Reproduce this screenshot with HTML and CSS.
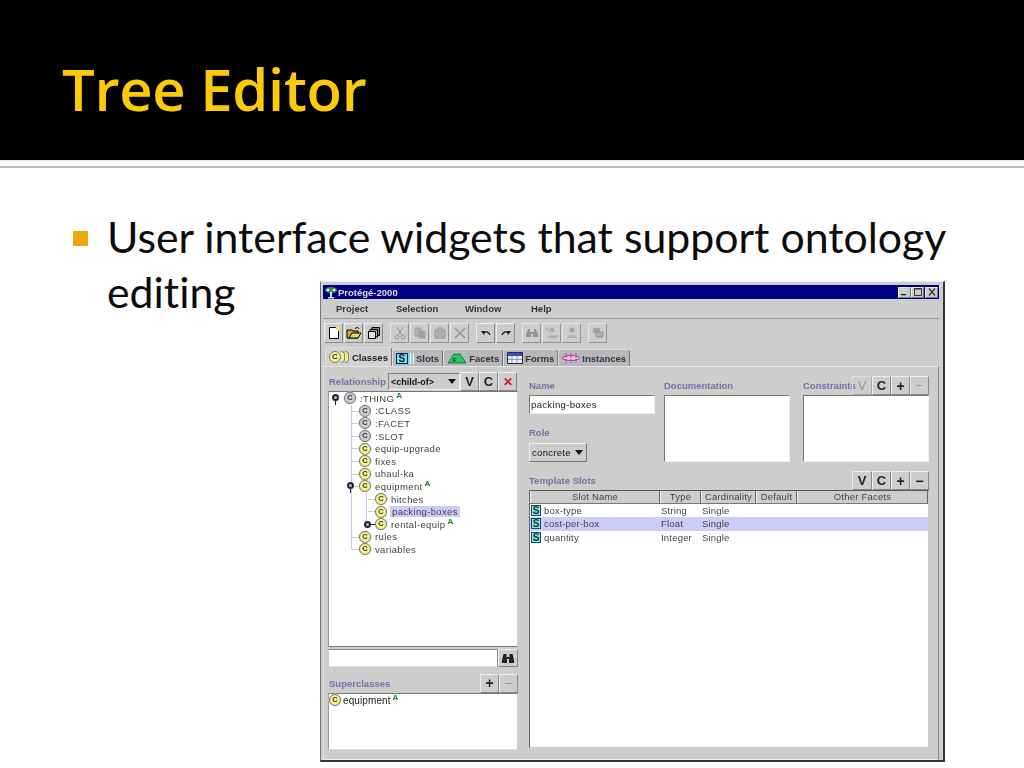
FILE: index.html
```html
<!DOCTYPE html>
<html lang="en">
<head>
<meta charset="utf-8">
<title>Tree Editor</title>
<link rel="stylesheet" href="styles.css">
</head>
<body>
<div class="slide">
  <header class="head"><h1>Tree Editor</h1></header>
  <div class="rule"></div>
  <div class="body">
    <span class="bullet"></span>
    <p class="point">User interface widgets that support ontology<br>editing</p>
  </div>

  <div class="window">
    <div class="titlebar">
      <svg class="appicon" width="14" height="13" viewBox="0 0 14 13"><path d="M1 4c0-2 3-3 6-3s6 1 6 3-2 3-6 3-6-1-6-3z" fill="#3c8a4a"/><circle cx="4" cy="4" r="1.300" fill="#eee"/><circle cx="10" cy="4" r="1.300" fill="#eee"/><path d="M6 6h2v5h2v1.500H4V11h2z" fill="#ddd"/></svg>
      <span class="wintitle">Protégé-2000</span>
      <span class="winbtns">
        <span class="winbtn"><svg width="10" height="8" viewBox="0 0 10 8"><path d="M1 6h5v1.300H1z" fill="#222"/></svg></span>
        <span class="winbtn"><svg width="10" height="8" viewBox="0 0 10 8"><path d="M1.500 .5h7v7h-7z" fill="none" stroke="#333"/><path d="M1.500 1h7" stroke="#333"/></svg></span>
        <span class="winbtn close"><svg width="10" height="8" viewBox="0 0 10 8"><path d="M2 .5l6 7M8 .5l-6 7" stroke="#333" stroke-width="1.200"/></svg></span>
      </span>
    </div>
    <nav class="menubar"><span>Project</span><span>Selection</span><span>Window</span><span>Help</span></nav>
    <div class="toolbar">
      <div class="toolgroup">
        <span class="tool"><svg width="14" height="14" viewBox="0 0 14 14"><path d="M2.500 1.500h6l3 3v8h-9z" fill="#fff" stroke="#000"/><circle cx="11" cy="3" r="2" fill="#f4ee50"/></svg></span>
        <span class="tool"><svg width="16" height="14" viewBox="0 0 16 14"><path d="M1 4h5l1 1h5v7H1z" fill="#c8a838" stroke="#000"/><path d="M3 12l3-5h9l-3 5z" fill="#f0d860" stroke="#000"/><path d="M9 3c1-2 3-2 4 0" fill="none" stroke="#000"/></svg></span>
        <span class="tool"><svg width="14" height="14" viewBox="0 0 14 14"><path d="M5 1.500h7.500v8H5z" fill="#888" stroke="#000"/><path d="M3 3.500h7.500v7.500H3z" fill="#aaa" stroke="#000"/><path d="M1.500 5.500h7v7h-7z" fill="#ddd" stroke="#000"/></svg></span>
      </div>
      <div class="toolgroup">
        <span class="tool off"><svg width="12" height="14" viewBox="0 0 12 14"><path d="M3 1l5 8M9 1L4 9" stroke="#888" fill="none"/><circle cx="3" cy="11" r="2" fill="none" stroke="#888"/><circle cx="9" cy="11" r="2" fill="none" stroke="#888"/></svg></span>
        <span class="tool off"><svg width="14" height="14" viewBox="0 0 14 14"><path d="M2 2h6v8H2z" fill="#aaa" stroke="#999"/><path d="M6 5h6v7H6z" fill="#999" stroke="#999"/></svg></span>
        <span class="tool off"><svg width="14" height="14" viewBox="0 0 14 14"><path d="M2 4h10v8H2z" fill="#aaa" stroke="#888"/><path d="M5 2h4v3H5z" fill="#bbb" stroke="#888"/></svg></span>
        <span class="tool off"><svg width="14" height="14" viewBox="0 0 14 14"><path d="M2 2l10 10M12 2L2 12" stroke="#888" stroke-width="1.500"/></svg></span>
      </div>
      <div class="toolgroup">
        <span class="tool"><svg width="12" height="10" viewBox="0 0 12 10"><path d="M10 7c-1-3-4-4-7-2" fill="none" stroke="#113" stroke-width="1.200"/><path d="M1 3l4 0-1 4z" fill="#113"/></svg></span>
        <span class="tool"><svg width="12" height="10" viewBox="0 0 12 10"><path d="M2 7c1-3 4-4 7-2" fill="none" stroke="#113" stroke-width="1.200"/><path d="M11 3l-4 0 1 4z" fill="#113"/></svg></span>
      </div>
      <div class="toolgroup">
        <span class="tool off"><svg width="14" height="14" viewBox="0 0 14 14"><path d="M1 8l2-5h2v3h4V3h2l2 5v3H8V8H6v3H1z" fill="#888"/></svg></span>
        <span class="tool off"><svg width="14" height="14" viewBox="0 0 14 14"><circle cx="7" cy="4" r="2.500" fill="#aaa"/><path d="M2 12c1-4 9-4 10 0z" fill="#aaa"/><path d="M1 2l3 3M11 9l2 2" stroke="#888"/></svg></span>
        <span class="tool off"><svg width="14" height="14" viewBox="0 0 14 14"><circle cx="7" cy="4" r="2.500" fill="#999"/><path d="M2 12c1-4 9-4 10 0z" fill="#aaa"/></svg></span>
      </div>
      <div class="toolgroup">
        <span class="tool off"><svg width="14" height="14" viewBox="0 0 14 14"><path d="M2 2h7v5H2z" fill="#999"/><path d="M5 6h7v5H5z" fill="#aaa" stroke="#888"/></svg></span>
      </div>
    </div>
    <div class="tabs">
      <span class="tab active"><span class="tabc"><span class="cicon">C</span><i></i><i></i></span>Classes</span>
      <span class="tab"><span class="tabs-icon">S</span><span class="tabs-bars"></span>Slots</span>
      <span class="tab"><svg width="20" height="12" viewBox="0 0 20 12"><path d="M1 11L7 2h6l6 9z" fill="#30c068" stroke="#085"/><text x="6" y="10" font-size="6" font-family="Liberation Sans" fill="#030">F</text></svg>Facets</span>
      <span class="tab"><svg width="16" height="12" viewBox="0 0 16 12"><path d="M.5.500h15v11H.5z" fill="#eee" stroke="#226"/><path d="M1 1h14v3H1z" fill="#3a50b8"/><path d="M5 4v7M10 4v7M1 7.500h14" stroke="#99a"/></svg>Forms</span>
      <span class="tab"><svg width="18" height="12" viewBox="0 0 18 12"><ellipse cx="9" cy="6" rx="8.500" ry="2.500" fill="#f0c0f0" stroke="#a040a0"/><path d="M4 1v10M9 1v10M14 1v10" stroke="#a040a0" stroke-dasharray="2 1"/></svg>Instances</span>
    </div>
    <div class="panel">
      <section class="left">
        <div class="relrow">
          <span class="label">Relationship</span>
          <span class="combo rel"><span>&lt;child-of&gt;</span><span class="arrow"></span></span>
          <span class="sq">V</span><span class="sq">C</span><span class="sq red">✕</span>
        </div>
        <div class="tree">
          <ul class="t0">
            <li>
              <div class="row"><span class="handle open"></span><span class="cicon grey">C</span><span class="nm">:THING</span><span class="a">A</span></div>
              <ul class="t1">
                <li><div class="row"><span class="cicon grey">C</span><span class="nm">:CLASS</span></div></li>
                <li><div class="row"><span class="cicon grey">C</span><span class="nm">:FACET</span></div></li>
                <li><div class="row"><span class="cicon grey">C</span><span class="nm">:SLOT</span></div></li>
                <li><div class="row"><span class="cicon">C</span><span class="nm">equip-upgrade</span></div></li>
                <li><div class="row"><span class="cicon">C</span><span class="nm">fixes</span></div></li>
                <li><div class="row"><span class="cicon">C</span><span class="nm">uhaul-ka</span></div></li>
                <li>
                  <div class="row"><span class="handle open"></span><span class="cicon">C</span><span class="nm">equipment</span><span class="a">A</span></div>
                  <ul class="t2">
                    <li><div class="row"><span class="cicon">C</span><span class="nm">hitches</span></div></li>
                    <li><div class="row"><span class="cicon">C</span><span class="nm sel">packing-boxes</span></div></li>
                    <li><div class="row"><span class="handle closed"></span><span class="cicon">C</span><span class="nm">rental-equip</span><span class="a">A</span></div></li>
                  </ul>
                </li>
                <li><div class="row"><span class="cicon">C</span><span class="nm">rules</span></div></li>
                <li><div class="row"><span class="cicon">C</span><span class="nm">variables</span></div></li>
              </ul>
            </li>
          </ul>
        </div>
        <div class="searchrow">
          <span class="search"></span>
          <span class="sq find"><svg width="14" height="12" viewBox="0 0 14 12"><path d="M1 8l1.500-6h3v3h3V2h3L13 8v3H8V7H6v4H1z" fill="#222"/></svg></span>
        </div>
        <div class="superrow">
          <span class="label">Superclasses</span>
          <span class="sqgroup"><span class="sq plus">+</span><span class="sq off">−</span></span>
        </div>
        <div class="superlist">
          <div class="row"><span class="cicon">C</span><span class="nm">equipment</span><span class="a">A</span></div>
        </div>
      </section>
      <section class="right">
        <div class="fields">
          <div class="col1">
            <span class="label lh">Name</span>
            <div class="input">packing-boxes</div>
            <span class="label role">Role</span>
            <span class="combo conc"><span>concrete</span><span class="arrow"></span></span>
          </div>
          <div class="col2">
            <span class="label lh">Documentation</span>
            <div class="box"></div>
          </div>
          <div class="col3">
            <div class="conhead">
              <span class="label">Constraints</span>
              <span class="sqgroup over wide"><span class="sq off">V</span><span class="sq">C</span><span class="sq plus">+</span><span class="sq off">−</span></span>
            </div>
            <div class="box"></div>
          </div>
        </div>
        <div class="slotshead">
          <span class="label">Template Slots</span>
          <span class="sqgroup wide"><span class="sq">V</span><span class="sq">C</span><span class="sq plus">+</span><span class="sq plus">−</span></span>
        </div>
        <div class="table">
          <div class="thead">
            <span class="th c1">Slot Name</span><span class="th c2">Type</span><span class="th c3">Cardinality</span><span class="th c4">Default</span><span class="th c5">Other Facets</span>
          </div>
          <div class="tr"><span class="td c1"><span class="sicon">S</span>box-type</span><span class="td c2">String</span><span class="td c3">Single</span></div>
          <div class="tr on"><span class="td c1"><span class="sicon">S</span>cost-per-box</span><span class="td c2">Float</span><span class="td c3">Single</span></div>
          <div class="tr"><span class="td c1"><span class="sicon">S</span>quantity</span><span class="td c2">Integer</span><span class="td c3">Single</span></div>
        </div>
      </section>
    </div>
  </div>
</div>
</body>
</html>
```

FILE: styles.css
```css
* { box-sizing: border-box; }
html, body { margin: 0; padding: 0; }
body { background: #fff; }
.slide { position: relative; width: 1024px; height: 768px; overflow: hidden; background: #fff; font-family: "Lato", "Open Sans", sans-serif; font-variant-ligatures: none; }
.head { height: 160px; background: #000; padding: 54px 0 0 62px; }
.head h1 { margin: 0; font-family: "Open Sans", "Lato", sans-serif; font-size: 58px; line-height: 70px; font-weight: 600; color: #fcca08; letter-spacing: -0.300px; }
.rule { height: 8px; border-bottom: 2px solid #bbb; background: linear-gradient(#ddd, #fff 30%); }
.body { position: relative; display: flex; padding: 41px 0 0 73px; }
.bullet { width: 15px; height: 15px; margin: 22px 19px 0 0; background: #eaa90c; flex: none; }
.point { margin: 0; font-size: 42.800px; line-height: 55px; color: #0c0c0c; white-space: nowrap; }

.window { position: absolute; left: 320px; top: 281px; width: 625px; height: 481px; background: #cdcdcd; border-right: 2px solid #333; border-bottom: 2px solid #333; border-left: 1px solid #777; border-top: 1px solid #eee; padding: 3px 4px 0 2px; font-family: "Liberation Sans", Arial, sans-serif; font-size: 9.500px; color: #222; filter: blur(0.5px); }
.titlebar { height: 14px; background: #000080; display: flex; align-items: center; padding: 0 1px 0 1px; color: #ddd; }
.appicon { flex: none; margin-right: 0; }
.wintitle { font-weight: 700; font-size: 9.500px; }
.winbtns { margin-left: auto; display: flex; gap: 0; }
.winbtn { width: 13px; height: 11px; background: #ccc; border: 1px solid; border-color: #eee #777 #777 #eee; display: flex; align-items: center; justify-content: center; }
.winbtn.close { margin-left: 1px; }
.menubar { height: 20px; border-bottom: 1px solid #999; display: flex; align-items: center; padding-left: 13px; font-weight: 700; font-size: 9.500px; color: #333; }
.menubar span:nth-child(1) { width: 60px; }
.menubar span:nth-child(2) { width: 69px; }
.menubar span:nth-child(3) { width: 66px; }
.toolbar { display: flex; height: 22px; margin-top: 4px; padding-left: 1px; gap: 7px; }
.toolgroup { display: flex; gap: 1px; }
.tool { width: 19px; height: 20px; display: flex; align-items: center; justify-content: center; border: 1px solid; border-color: #eee #888 #888 #eee; }
.tool.off { opacity: .8; }
.tabs { display: flex; height: 20px; margin-top: 1px; padding-left: 2px; font-weight: 700; font-size: 9.500px; color: #334; align-items: flex-end; }
.tab { height: 17px; display: flex; align-items: center; gap: 2px; padding: 0 3px 0 3px; background: #b8b8b8; border: 1px solid #ddd; border-right-color: #777; border-bottom: none; border-radius: 3px 3px 0 0; white-space: nowrap; }
.tab.active { height: 19px; background: #d2d2d2; color: #222; padding-left: 3px; }
.tabc { display: flex; align-items: center; margin-right: 1px; }
.tabc .cicon { width: 12px; height: 12px; line-height: 10px; font-size: 8px; }
.tabc i { width: 4px; height: 12px; border: 1px solid #886; border-left: none; background: #f4ee90; border-radius: 0 6px 6px 0; }
.tabs-icon { width: 12px; height: 11px; background: #80dcdc; border: 1px solid #026; font-size: 10px; line-height: 9px; text-align: center; color: #024; }
.tabs-bars { width: 6px; height: 11px; margin-left: -2px; margin-right: 0; background: repeating-linear-gradient(90deg, #80dcdc 0 2px, #eee 2px 3px); }
.panel { height: 394px; border: 1px solid; border-color: #e4e4e4 #888 #eee #e4e4e4; display: flex; padding: 5px 12px 0 4px; }
.left { width: 190px; flex: none; display: flex; flex-direction: column; }
.label { font-weight: 700; font-size: 9.500px; color: #7272a4; white-space: nowrap; }
.relrow { height: 19px; display: flex; align-items: center; }
.relrow .label { margin: 0 2px 0 1px; }
.combo { display: flex; align-items: center; justify-content: space-between; background: #cdcdcd; border: 1px solid; border-color: #888 #eee #eee #888; color: #111; font-weight: 700; font-size: 9px; padding: 0 3px 0 2px; }
.combo.rel { width: 72px; height: 17px; }
.arrow { width: 0; height: 0; border-left: 4.500px solid transparent; border-right: 4.500px solid transparent; border-top: 5px solid #111; }
.sq { width: 19px; height: 19px; flex: none; display: flex; align-items: center; justify-content: center; font-weight: 700; font-size: 13px; color: #222; border: 1px solid; border-color: #eee #888 #888 #eee; background: #cdcdcd; }
.sq.red { color: #c02020; font-size: 12px; }
.sq.plus { font-size: 14px; }
.sq.off { color: #999; font-weight: 400; }
.sq.find { height: 18px; width: 20px; }
.wide .sq:first-child { width: 20px; }
.over .sq:first-child { background: transparent; border-color: #ddd #aaa #aaa #ddd; }
.tree { height: 256px; background: #fff; border: 1px solid; border-color: #777 #ccc #777 #999; padding: 0; font-size: 9.500px; color: #444; letter-spacing: .35px; }
.tree ul { list-style: none; margin: 0; padding: 0; }
.t0 { padding-left: 15px !important; }
.t1, .t2 { position: relative; padding-left: 15px !important; }
.t1::before, .t2::before { content: ""; position: absolute; left: 7px; top: 0; bottom: 6px; width: 1px; background: #c8c8e6; }
.t2 { padding-left: 16px !important; }
.row { position: relative; height: 12.600px; display: flex; align-items: center; white-space: nowrap; }
.t1 > li > .row::before, .t2 > li > .row::before { content: ""; position: absolute; left: -7px; top: 6px; width: 7px; height: 1px; background: #c8c8e6; }
.cicon { width: 12px; height: 12px; flex: none; border-radius: 50%; background: #f6f090; border: 1px solid #777; box-shadow: 0 0 0 .5px #ddd; color: #333; font-size: 7.500px; font-weight: 700; line-height: 10px; text-align: center; letter-spacing: 0; }
.cicon.grey { background: #ccc; }
.nm { margin-left: 3px; padding: 0 1px; }
.sel { background: #ccccf8; margin-left: 3px; padding: 0 2px; }
.a { color: #0a8a2a; font-size: 8px; font-weight: 700; margin: -5px 0 0 1px; letter-spacing: 0; }
.handle { position: absolute; z-index: 1; width: 7px; height: 7px; border-radius: 50%; background: #bbb; border: 2px solid #223; }
.handle.open { left: -12px; top: 2px; }
.handle.open::after { content: ""; position: absolute; left: 1px; top: 5px; width: 1px; height: 4px; background: #223; }
.handle.closed { left: -11px; top: 3px; }
.handle.closed::after { content: ""; position: absolute; left: 5px; top: 1px; width: 4px; height: 1px; background: #223; }
.searchrow { display: flex; margin-top: 2px; height: 19px; }
.search { flex: 1; height: 18px; background: #fff; border: 1px solid; border-color: #888 #888 #ddd #ccc; }
.superrow { height: 20px; margin-top: 5px; display: flex; align-items: center; justify-content: space-between; }
.superrow .label { margin-left: 1px; }
.sqgroup { display: flex; }
.superlist { height: 57px; background: #fff; border: 1px solid; border-color: #777 #ccc #ddd #999; font-size: 10px; color: #222; letter-spacing: .1px; }
.superlist .nm { margin-left: 1px; }
.right { flex: 1; margin-left: 11px; display: flex; flex-direction: column; min-width: 0; }
.fields { display: grid; grid-template-columns: 126px 126px 126px; column-gap: 9px; height: 91px; }
.fields > div { min-width: 0; }
.col3 { margin-left: 4px; width: 126px; }
.lh { display: block; height: 23px; line-height: 14px; padding-top: 7px; }
.input { height: 19px; width: 126px; background: #fff; border: 1px solid; border-color: #777 #eee #eee #777; padding-left: 1px; line-height: 17px; font-size: 9.500px; letter-spacing: .35px; color: #222; }
.role { display: block; margin-top: 13px; height: 14px; }
.combo.conc { width: 58px; height: 19px; margin-top: 2px; border-color: #eee #777 #777 #eee; letter-spacing: .3px; font-size: 9.500px; font-weight: 400; color: #111; }
.box { height: 67px; background: #fff; border: 1px solid; border-color: #777 #eee #eee #777; }
.conhead { position: relative; height: 23px; padding-top: 7px; line-height: 14px; }
.sqgroup.over { position: absolute; right: 0; top: 4px; }
.slotshead { height: 19px; margin-top: 8px; display: flex; align-items: center; justify-content: space-between; width: 400px; }
.table { width: 400px; height: 258px; background: #fff; border: 1px solid; border-color: #555 #ccc #ccc #666; font-size: 9.500px; color: #444; letter-spacing: .2px; }
.thead { display: flex; height: 13px; background: #cdcdcd; border-bottom: 1px solid #777; }
.th { border-right: 1px solid #666; border-left: 1px solid #eee; text-align: center; line-height: 12px; white-space: nowrap; }
.c1 { width: 130px; flex: none; }
.c2 { width: 41px; flex: none; }
.c3 { width: 55px; flex: none; }
.c4 { width: 41px; flex: none; }
.c5 { flex: 1; }
.tr { display: flex; height: 13.300px; align-items: center; white-space: nowrap; }
.tr.on { background: #ccccfb; }
.td { padding-left: 1px; }
.td.c1 { display: flex; align-items: center; gap: 3px; }
.sicon { width: 10px; height: 11px; background: #8fe0dc; border: 1px solid #1a4a5a; font-size: 10px; font-weight: 700; line-height: 9px; text-align: center; color: #034; letter-spacing: 0; }
```
